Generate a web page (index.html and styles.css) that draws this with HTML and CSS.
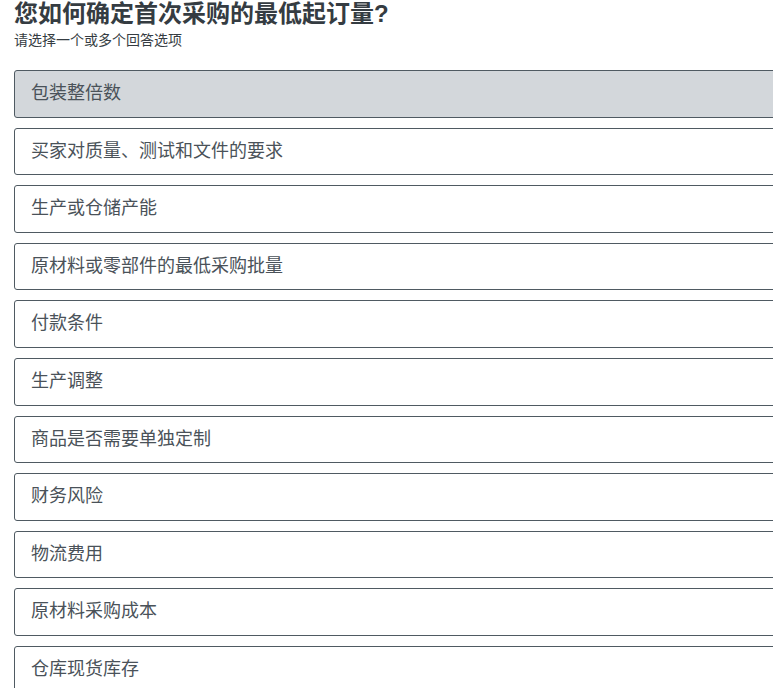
FILE: index.html
```
<!DOCTYPE html>
<html>
  <head>
    <meta charset="utf-8" />
    <title>最低起订量</title>
    <link rel="stylesheet" href="styles.css">
  </head>
  <body>
    <div class="question">
      <h1 class="title">您如何确定首次采购的最低起订量?</h1>
      <p class="hint">请选择一个或多个回答选项</p>

      <!-- 回答选项 -->
      <ul class="options">
        <li class="option selected">包装整倍数</li>
        <li class="option">买家对质量、测试和文件的要求</li>
        <li class="option">生产或仓储产能</li>
        <li class="option">原材料或零部件的最低采购批量</li>
        <li class="option">付款条件</li>
        <li class="option">生产调整</li>
        <li class="option">商品是否需要单独定制</li>
        <li class="option">财务风险</li>
        <li class="option">物流费用</li>
        <li class="option">原材料采购成本</li>
        <li class="option">仓库现货库存</li>
      </ul>
    </div>
  </body>
</html>
```

FILE: styles.css
```
html {
  overflow: hidden;
}
body {
  margin: 0;
  background: #fff;
  font-family: "Liberation Sans", "Noto Sans CJK SC", sans-serif;
  color: #353c42;
}
.question {
  padding: 0 0 0 14px;
}
.title {
  margin: 0;
  font-size: 24px;
  line-height: 28px;
  font-weight: bold;
  color: #353c42;
}
.hint {
  margin: 3px 0 0;
  font-size: 14px;
  line-height: 19px;
  color: #353c42;
}
.options {
  list-style: none;
  margin: 20px -10px 0 0;
  padding: 0;
}
.option {
  margin-bottom: 10px;
  padding: 12px 16px;
  border: 1px solid #4f5a62;
  border-radius: 3px;
  font-size: 18px;
  line-height: 21.6px;
  color: #4a5259;
  background: #fff;
  cursor: pointer;
}
.option.selected {
  background: #d3d7db; /* 选中状态 */
}
```
